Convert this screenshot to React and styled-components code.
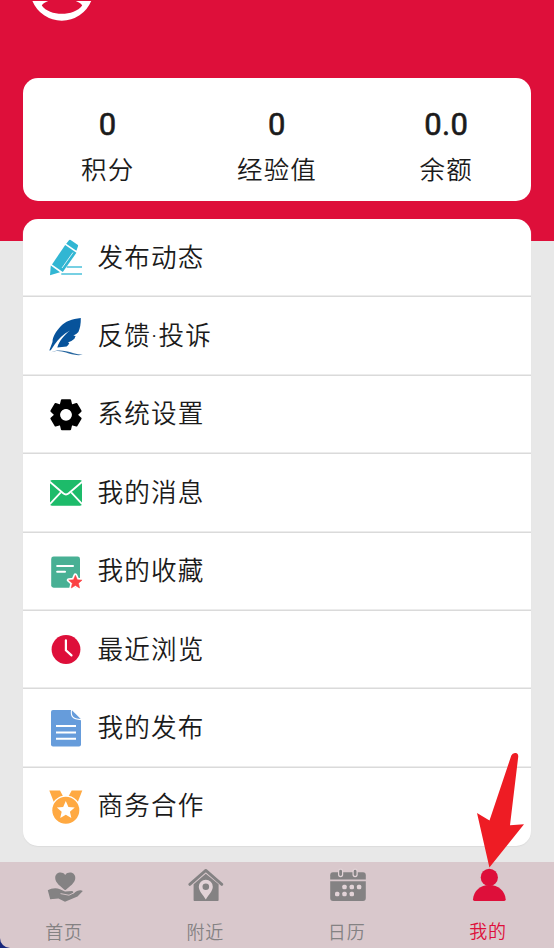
import React from 'react';
import styled, { createGlobalStyle } from 'styled-components';

const STAR = 'M0 -1L.28 -.36L.95 -.31L.44 .13L.59 .81L0 .45L-.59 .81L-.44 .13L-.95 -.31L-.28 -.36Z';

const PencilIcon = () => (
  <MenuSvg viewBox="0 0 36 40">
    <g fill="#31b6d3">
      <path d="M4 26.4L17.2 7L28.4 14.8L14.8 34Z" />
      <path d="M18.2 5.8L21 2.2Q21.7 1.4 22.6 2L29.6 6.8Q30.5 7.5 29.9 8.4L28.4 12.8Z" />
      <path d="M2.8 27.6L12 34.2L2 37.2Z" />
    </g>
    <path d="M25 14.5L14 30" stroke="#fff" strokeWidth=".8" />
    <path d="M18.7 29H34M13.3 36H34" stroke="#4bc1da" strokeWidth="1.6" />
  </MenuSvg>
);

const FeatherIcon = () => (
  <MenuSvg viewBox="0 0 36 40">
    <path
      d="M32.8 1C24 1.8 17 4.5 12.5 9.5C8.5 14 4.6 19 4.5 25L1.3 33.4L2.8 33.2L6.6 27.6C10 22.5 15 17.5 22 13.6C16 18.5 11.5 23.5 9.3 30.4L18.6 29.6Q20.2 28.8 21.3 26L19.8 25.4Q23.4 24.8 26.4 21.8L27.6 18.9L25.3 18.4Q28.6 17.4 30.4 15Q33 9 32.8 1Z"
      fill="#07539b"
    />
    <path d="M2 36C8 32.8 13 33.8 18 35.6S28 38.8 34.8 37.8C28 37.6 23 34.9 18 34.2S8 32.8 2 36Z" fill="#2867a0" />
  </MenuSvg>
);

const GearIcon = () => (
  <MenuSvg viewBox="0 0 36 40">
    <g transform="translate(18 19.8)">
      {[0, 60, 120, 180, 240, 300].map((deg) => (
        <path
          key={deg}
          d="M-5.4 -9L-4.1 -14.5H4.1L5.4 -9Z"
          stroke="#000"
          strokeWidth="2"
          strokeLinejoin="round"
          transform={`rotate(${deg})`}
        />
      ))}
      <circle r="8.8" fill="none" stroke="#000" strokeWidth="6" />
      <circle r="5.6" fill="#fff" />
    </g>
  </MenuSvg>
);

const MailIcon = () => (
  <MenuSvg viewBox="0 0 36 40">
    <rect x="2" y="7" width="32" height="25.8" rx="2" fill="#1dbb6a" />
    <g fill="none" stroke="#fff" strokeWidth="1.8">
      <path d="M1.8 8.8L15.2 20.3Q18 22.7 20.8 20.3L34.2 8.8" />
      <path d="M1.8 31.2L12.8 19.3M34.2 31.2L23.2 19.3" />
    </g>
  </MenuSvg>
);

const CollectIcon = () => (
  <MenuSvg viewBox="0 0 36 40">
    <rect x="3.2" y="4.5" width="28.8" height="31.2" rx="2.4" fill="#48b094" />
    <path d="M9.2 14H25M9.2 19.8H17" stroke="#fff" strokeWidth="2.1" strokeLinecap="round" />
    <g transform="translate(27.4 30.3) scale(7)" strokeLinejoin="round">
      <path d={STAR} fill="#fff" stroke="#fff" strokeWidth=".55" />
      <path d={STAR} fill="#fb4143" stroke="#fb4143" strokeWidth=".08" />
    </g>
  </MenuSvg>
);

const ClockIcon = () => (
  <MenuSvg viewBox="0 0 36 40">
    <circle cx="18" cy="19.5" r="14.4" fill="#de0f3a" />
    <path d="M17.9 10.3V20.2L23.5 25.4" fill="none" stroke="#fff" strokeWidth="2.2" strokeLinecap="round" />
  </MenuSvg>
);

const FileIcon = () => (
  <MenuSvg viewBox="0 0 36 40">
    <path
      d="M5 2H23.7L33 11.3V36.6Q33 38.6 31 38.6H5Q3 38.6 3 36.6V4Q3 2 5 2Z"
      fill="#669cdb"
    />
    <path d="M23.5 2C22.6 8 24.3 11.3 33 11.6" fill="none" stroke="#fff" strokeWidth="1.1" />
    <path d="M8 18H28M8 24.4H28M8 30.8H28" stroke="#fff" strokeWidth="2" />
  </MenuSvg>
);

const MedalIcon = () => (
  <MenuSvg viewBox="0 0 36 40">
    <path d="M1.3 3.5H12L16 11L6 15.5Z" fill="#ffa942" />
    <path d="M34.3 3.5H23.7L19.6 11L29.6 15.5Z" fill="#ffa942" />
    <circle cx="17.8" cy="23.2" r="14.8" fill="#fff" />
    <circle cx="17.8" cy="23.2" r="13.5" fill="#ffa942" />
    <path d={STAR} fill="#fff" transform="translate(17.8 23.5) scale(9.4)" />
  </MenuSvg>
);

const CareIcon = () => (
  <TabSvg viewBox="0 0 36 36">
    <path d="M18.2 23.2C14 19.6 8.2 15.8 8.2 10.9C8.2 5.2 15.2 3.8 18.2 8C21.2 3.8 28.3 5.2 28.3 10.9C28.3 15.8 22.4 19.6 18.2 23.2Z" />
    <path d="M.8 23.3C4 21.3 9 20.6 13 22.2L18 24.4L25 24.1Q27.2 24.6 26 26.5L30 23.9Q34 22.6 35.8 24L30.5 29.6L18 34.8L11.5 31.5L3.2 32.3Z" />
    <path d="M13.5 26.6L22 28.2L27.2 25.7Q27.4 23.2 24.5 23.4L18 23.6" fill="none" stroke="#d9c8cc" strokeWidth=".9" />
  </TabSvg>
);

const NearbyIcon = () => (
  <TabSvg viewBox="0 0 36 36">
    <path d="M1.8 17.4L17.8 3.4L33.8 17.4" fill="none" stroke="currentColor" strokeWidth="2.8" strokeLinecap="round" strokeLinejoin="round" />
    <path d="M5.6 17.3L17.8 6.7L30.6 17.3V33.2Q30.6 34 29.8 34H6.4Q5.6 34 5.6 33.2Z" />
    <path d="M17.8 32.4C15 28 10.8 24 10.8 19.8A7 7 0 0 1 24.8 19.8C24.8 24 20.6 28 17.8 32.4Z" fill="#e2d3d7" />
    <circle cx="17.8" cy="19.8" r="3.3" />
  </TabSvg>
);

const CalendarIcon = () => (
  <TabSvg viewBox="0 0 36 36">
    <path d="M.2 12.4V8.2Q.2 5.3 3 5.3H33Q35.8 5.3 35.8 8.2V12.4Z" />
    <path d="M.2 14.2H35.8V31Q35.8 34 33 34H3Q.2 34 .2 31Z" />
    <rect x="8.6" y="2.2" width="4" height="7.4" rx="2" stroke="#e2d3d7" strokeWidth="1.2" />
    <rect x="23.1" y="2.2" width="4" height="7.4" rx="2" stroke="#e2d3d7" strokeWidth="1.2" />
    <g fill="#e2d3d7">
      {[[14.5, 20], [21.8, 20], [29.1, 20], [7.2, 27], [14.5, 27], [21.8, 27]].map(([x, y]) => (
        <rect key={`${x}-${y}`} x={x - 2.2} y={y - 2.2} width="4.4" height="4.4" rx="1.5" />
      ))}
    </g>
  </TabSvg>
);

const PersonIcon = () => (
  <TabSvg viewBox="0 0 36 36">
    <circle cx="18.3" cy="10.4" r="8.6" />
    <path d="M2 32.2C2.6 24 9.4 18 18.3 18S34 24 34.7 32.2Q34.8 34 33.2 34H3.5Q1.9 34 2 32.2Z" />
  </TabSvg>
);

const stats = [
  { value: '0', label: '积分' },
  { value: '0', label: '经验值' },
  { value: '0.0', label: '余额' },
];

const menus = [
  { label: '发布动态', Icon: PencilIcon },
  { label: '反馈·投诉', Icon: FeatherIcon },
  { label: '系统设置', Icon: GearIcon },
  { label: '我的消息', Icon: MailIcon },
  { label: '我的收藏', Icon: CollectIcon },
  { label: '最近浏览', Icon: ClockIcon },
  { label: '我的发布', Icon: FileIcon },
  { label: '商务合作', Icon: MedalIcon },
];

const tabs = [
  { label: '首页', Icon: CareIcon },
  { label: '附近', Icon: NearbyIcon },
  { label: '日历', Icon: CalendarIcon },
  { label: '我的', Icon: PersonIcon, active: true },
];

const App = () => {
  return (
    <>
      <GlobalStyle />
      <Screen>
        <Content>
          <Header>
            <Logo viewBox="0 0 64 24">
              <path
                d="M1.4 1A31.8 31.8 0 0 0 60.2 1H44.8C48 2.2 50 3.6 51.2 5.4C43 16.5 18.6 16.5 10.8 5.4C12 3.6 14 2.2 17.2 1Z"
                fill="#fff"
              />
            </Logo>
          </Header>
          <StatCard>
            {stats.map(({ value, label }) => (
              <Stat key={label}>
                <StatValue>{value}</StatValue>
                <StatLabel>{label}</StatLabel>
              </Stat>
            ))}
          </StatCard>
          <MenuCard>
            {menus.map(({ label, Icon }) => (
              <MenuRow key={label}>
                <Icon />
                <MenuText>{label}</MenuText>
              </MenuRow>
            ))}
          </MenuCard>
        </Content>
        <TabBar>
          {tabs.map(({ label, Icon, active }) => (
            <Tab key={label} $active={active}>
              <Icon />
              <TabText $active={active}>{label}</TabText>
            </Tab>
          ))}
        </TabBar>
        <Pointer viewBox="0 0 50 118">
          <path
            d="M36.3 5.5Q37.6 2.6 40.6 3Q43.6 3.4 43.2 7L35 75.2L49 74.2L14.4 117.4L2 63L14.5 70.5Z"
            fill="#ee1c24"
          />
        </Pointer>
      </Screen>
    </>
  );
};

const GlobalStyle = createGlobalStyle`
  * {
    box-sizing: border-box;
  }
  body {
    margin: 0;
    background: #17277c;
    font-family: Roboto, "Noto Sans CJK SC", sans-serif;
    color: #1b1b1b;
  }
`;

const Screen = styled.div`
  position: relative;
  display: flex;
  flex-direction: column;
  height: 948px;
  overflow: hidden;
  border-bottom-left-radius: 10px;
`;

const Content = styled.main`
  height: 862px;
  padding: 0 23px;
  background: linear-gradient(#de0f3a 240.5px, #e8e8e8 240.5px);
`;

const Header = styled.header`
  height: 78px;
  padding-left: 8px;
`;

const Logo = styled.svg`
  display: block;
  width: 64px;
  height: 24px;
`;

const StatCard = styled.section`
  display: grid;
  grid-template-columns: repeat(3, 1fr);
  height: 123px;
  padding-top: 28px;
  border-radius: 15px;
  background: #fff;
`;

const Stat = styled.div`
  display: flex;
  flex-direction: column;
  align-items: center;
`;

const StatValue = styled.b`
  font: 400 31px/38px Roboto, sans-serif;
  letter-spacing: 0.4px;
  -webkit-text-stroke: 0.6px #1b1b1b;
`;

const StatLabel = styled.span`
  margin-top: 8px;
  font-size: 25.5px;
  font-weight: 350;
  line-height: 36px;
  letter-spacing: 1.2px;
`;

const MenuCard = styled.section`
  display: grid;
  grid-template-rows: repeat(8, 1fr);
  height: 627px;
  margin-top: 18px;
  overflow: hidden;
  border-radius: 15px;
  background: #fff;
  box-shadow: 0 1px 1px #dcdcdc;
`;

const MenuRow = styled.div`
  display: flex;
  align-items: center;
  padding-left: 25px;

  & + & {
    box-shadow: 0 -1.5px 0 #dadada;
  }
`;

const MenuSvg = styled.svg`
  width: 36px;
  height: 40px;
`;

const MenuText = styled.span`
  margin-left: 13.4px;
  margin-bottom: 1px;
  font-size: 25.6px;
  font-weight: 350;
  line-height: 36px;
  letter-spacing: 1.2px;
`;

const TabBar = styled.nav`
  display: grid;
  grid-template-columns: repeat(4, 1fr);
  height: 86px;
  padding-top: 5px;
  margin: 0 -5.7px;
  background: #d9c8cc;
`;

const Tab = styled.div`
  display: flex;
  flex-direction: column;
  align-items: center;
  color: ${({ $active }) => ($active ? '#de0f3a' : '#848283')};
`;

const TabSvg = styled.svg`
  width: 36px;
  height: 36px;
  fill: currentColor;
`;

const TabText = styled.span`
  margin-top: ${({ $active }) => ($active ? '15px' : '16px')};
  margin-right: 2px;
  font-size: 18px;
  font-weight: 350;
  line-height: 28px;
  letter-spacing: 0.8px;
`;

// red arrow laid over the list, its tip on the active tab
const Pointer = styled.svg`
  position: absolute;
  left: 475px;
  top: 750px;
  width: 50px;
  height: 118px;
`;

export default App;
